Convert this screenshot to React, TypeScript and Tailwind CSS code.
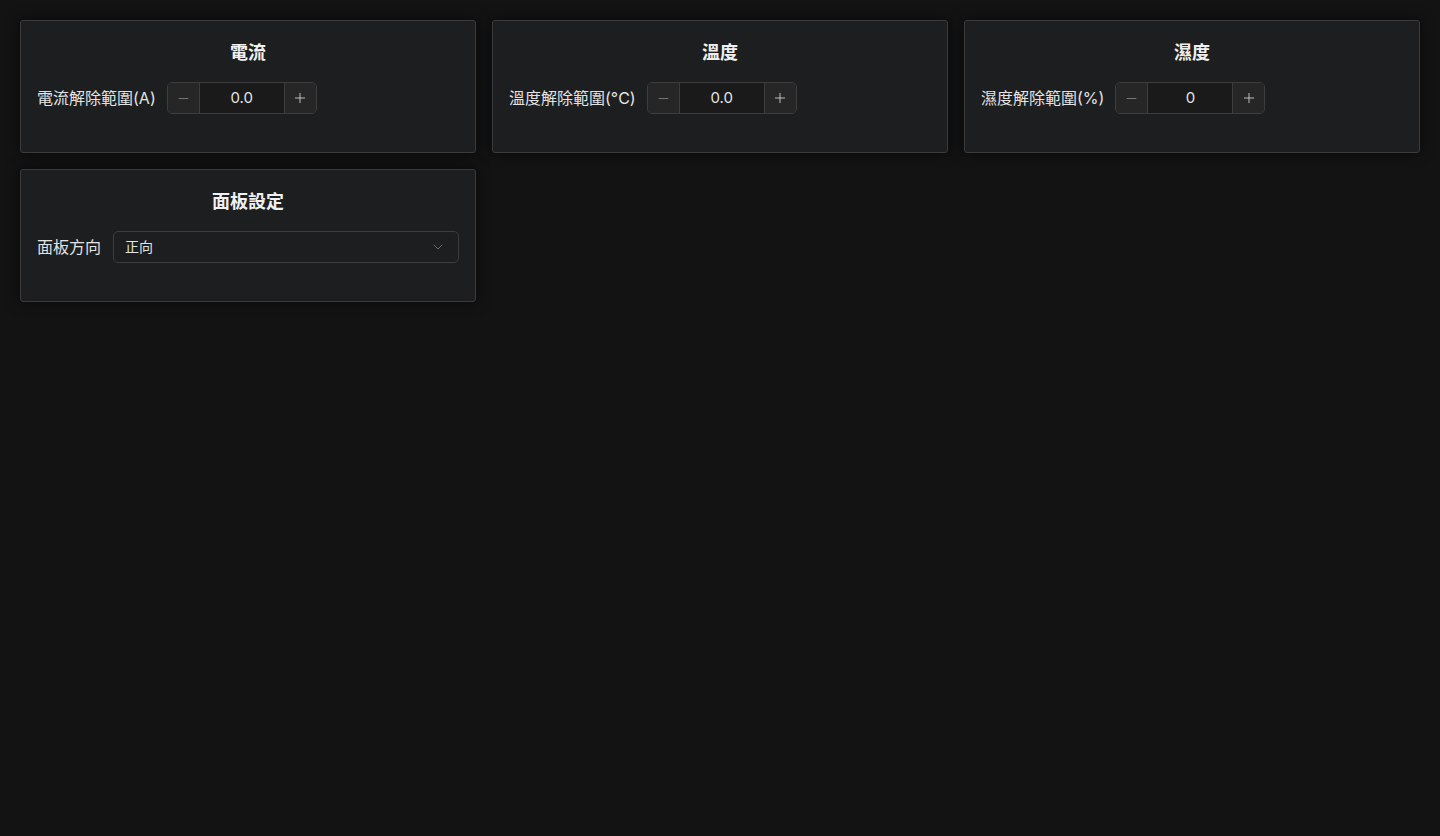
import { Minus, Plus, ChevronDown } from "lucide-react";

const font = {
  fontFamily: 'Inter, "Noto Sans CJK TC", sans-serif',
};

interface StepperProps {
  label: string;
  value: string;
}

const Stepper = ({ label, value }: StepperProps) => {
  return (
    <div className="flex items-center gap-[11px]">
      <span className="text-base text-[#e3e3e3] whitespace-nowrap">{label}</span>
      <div className="flex h-8 w-[150px] rounded-[5px] border border-[#3d3d3d] overflow-hidden">
        <button className="flex w-8 items-center justify-center bg-[#262626] text-[#8c8c8c] border-r border-[#3d3d3d]">
          <Minus size={15} strokeWidth={1.25} />
        </button>
        <div className="flex flex-1 items-center justify-center bg-[#1a1a1a] text-[15px] text-[#e3e3e3]">
          {value}
        </div>
        <button className="flex w-8 items-center justify-center bg-[#262626] text-[#d9d9d9] border-l border-[#3d3d3d]">
          <Plus size={16} strokeWidth={1.25} />
        </button>
      </div>
    </div>
  );
};

const Card = ({ title, children }: { title: string; children: React.ReactNode }) => {
  return (
    <section className="rounded-[3px] border border-[#3a3b3d] bg-[#1d1e20] p-4 shadow-[0_0_14px_rgba(0,0,0,0.55)]">
      <h2 className="mt-[2px] mb-[15px] h-7 text-center text-lg font-bold leading-7 text-[#f0f0f0]">
        {title}
      </h2>
      <div className="mb-[22px]">{children}</div>
    </section>
  );
};

export default function App() {
  return (
    <div className="min-h-screen bg-[#131313] p-5" style={font}>
      <div className="grid grid-cols-3 gap-4">
        {/* 電流 */}
        <Card title="電流">
          <Stepper label="電流解除範圍(A)" value="0.0" />
        </Card>

        {/* 溫度 */}
        <Card title="溫度">
          <Stepper label="溫度解除範圍(°C)" value="0.0" />
        </Card>

        {/* 濕度 */}
        <Card title="濕度">
          <Stepper label="濕度解除範圍(%)" value="0" />
        </Card>

        {/* 面板設定 */}
        <Card title="面板設定">
          <div className="flex items-center gap-3">
            <span className="text-base text-[#e3e3e3] whitespace-nowrap">面板方向</span>
            <div className="flex h-8 flex-1 items-center justify-between rounded-[5px] border border-[#3d3d3d] bg-[#1d1e20] pl-[11px] pr-3">
              <span className="text-sm text-[#e3e3e3]">正向</span>
              <ChevronDown size={16} strokeWidth={1.25} className="text-[#7a7a7a]" />
            </div>
          </div>
        </Card>
      </div>
    </div>
  );
}
